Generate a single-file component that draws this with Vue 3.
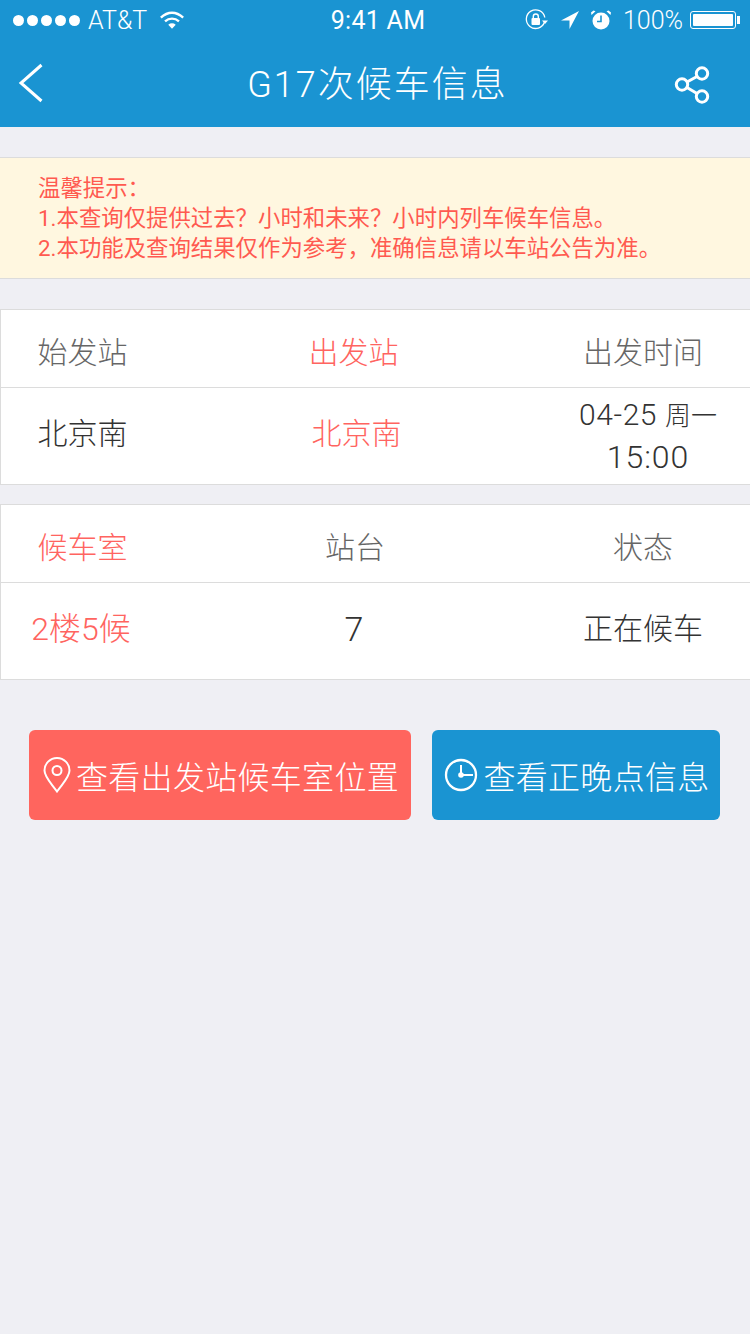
<template>
  <div class="page">
    <header class="head">
      <div class="status">
        <div class="status-left">
          <span class="dots"><i v-for="n in 5" :key="n"></i></span>
          <span class="carrier">AT&amp;T</span>
          <svg class="wifi" width="26" height="20" viewBox="0 0 28 20">
            <path d="M2 7.500C9.500 .5 18.500 .5 26 7.500" fill="none" stroke="#fff" stroke-width="2.600" />
            <path d="M6.500 11.500C11 7.500 17 7.500 21.500 11.500" fill="none" stroke="#fff" stroke-width="2.600" />
            <path d="M10 15c2.400-2 5.600-2 8 0l-4 4.500z" fill="#fff" />
          </svg>
        </div>
        <div class="clock">9:41 AM</div>
        <div class="status-right">
          <svg width="24" height="22" viewBox="0 0 24 22">
            <path d="M19.500 13A9.300 9.300 0 1 1 19.800 8.500" fill="none" stroke="#fff" stroke-width="1.300" />
            <path d="M17 11.500h6l-3 3.500z" fill="#fff" />
            <rect x="6.500" y="9" width="8.500" height="7" rx="1" fill="#fff" />
            <path d="M8.300 9V7.500a2.500 2.500 0 0 1 5 0V9" fill="none" stroke="#fff" stroke-width="1.400" />
          </svg>
          <svg class="arrow" width="20" height="20" viewBox="0 0 20 20">
            <path d="M19 1L1 10.500h8.500V19z" fill="#fff" />
          </svg>
          <svg class="alarm" width="22" height="22" viewBox="0 0 22 22">
            <circle cx="11" cy="12" r="8.500" fill="#fff" />
            <path d="M11 6.500V12.500H7" fill="none" stroke="#1a94d2" stroke-width="1.600" />
            <path d="M1.500 6L5.500 2.200 3.500 1.500 1 3.500zM20.500 6L16.500 2.200 18.500 1.500 21 3.500z" fill="#fff" />
          </svg>
          <span class="percent">100%</span>
          <span class="battery"><b></b></span>
        </div>
      </div>
      <nav class="nav">
        <svg class="back" width="26" height="40" viewBox="0 0 26 40">
          <path d="M23.500 2L3 20l20.500 18" fill="none" stroke="#fff" stroke-width="3" />
        </svg>
        <h1 class="title">G17次候车信息</h1>
        <svg class="share" width="38" height="44" viewBox="0 0 38 44">
          <circle cx="29" cy="10.500" r="5.700" fill="none" stroke="#fff" stroke-width="3" />
          <circle cx="9" cy="21.500" r="5.700" fill="none" stroke="#fff" stroke-width="3" />
          <circle cx="29" cy="33.500" r="5.700" fill="none" stroke="#fff" stroke-width="3" />
          <path d="M14 19L24 13.500M14 24.500L24 30.500" fill="none" stroke="#fff" stroke-width="3" />
        </svg>
      </nav>
    </header>

    <section class="tips">
      <p>温馨提示：</p>
      <p>1.本查询仅提供过去？小时和未来？小时内列车候车信息。</p>
      <p>2.本功能及查询结果仅作为参考，准确信息请以车站公告为准。</p>
    </section>

    <section class="card first">
      <div class="row top">
        <span class="muted">始发站</span>
        <span class="red pull">出发站</span>
        <span class="muted last">出发时间</span>
      </div>
      <div class="row bottom">
        <span class="dark">北京南</span>
        <span class="red shift">北京南</span>
        <span class="dark last date">
          <em>04-25 <small>周一</small></em>
          <em class="time">15:00</em>
        </span>
      </div>
    </section>

    <section class="card second">
      <div class="row top">
        <span class="red">候车室</span>
        <span class="muted">站台</span>
        <span class="muted last">状态</span>
      </div>
      <div class="row bottom">
        <span class="red big">2楼5候</span>
        <span class="dark seven">7</span>
        <span class="dark last">正在候车</span>
      </div>
    </section>

    <div class="actions">
      <button class="btn coral">
        <svg width="28" height="36" viewBox="0 0 28 36">
          <path d="M14 34.500C8 26 1.500 20 1.500 13.500a12.500 12.500 0 0 1 25 0C26.500 20 20 26 14 34.500z" fill="none" stroke="#fff" stroke-width="2" />
          <circle cx="14" cy="13.500" r="4.500" fill="none" stroke="#fff" stroke-width="2" />
        </svg>
        查看出发站候车室位置
      </button>
      <button class="btn blue">
        <svg width="34" height="34" viewBox="0 0 34 34">
          <circle cx="17" cy="17" r="15" fill="none" stroke="#fff" stroke-width="2.300" />
          <path d="M17 7v10h12" fill="none" stroke="#fff" stroke-width="2" />
          <circle cx="17" cy="17" r="2.800" fill="#fff" />
        </svg>
        查看正晚点信息
      </button>
    </div>
  </div>
</template>

<script setup>
</script>

<style>
body {
  background: #efeff4;
}
</style>

<style scoped>
.page {
  min-height: 1334px;
  background: #efeff4;
  font-family: "Roboto", "Noto Sans CJK SC", sans-serif;
  font-weight: 300;
}
.head {
  background: #1a94d2;
  color: #fff;
  height: 127px;
}
.status {
  height: 40px;
  display: grid;
  grid-template-columns: 1fr auto 1fr;
  align-items: center;
  padding: 0 10px 0 13px;
  font-size: 25px;
}
.status-left,
.status-right {
  display: flex;
  align-items: center;
}
.status-right {
  justify-content: flex-end;
}
.dots {
  display: flex;
  gap: 3px;
}
.dots i {
  width: 11px;
  height: 11px;
  border-radius: 50%;
  background: #fff;
}
.carrier {
  margin-left: 8px;
}
.wifi {
  margin-left: 12px;
}
.clock {
  letter-spacing: 0.3px;
  margin-left: 3px;
  font-weight: 400;
}
.arrow {
  margin-left: 11px;
}
.alarm {
  margin-left: 10px;
}
.percent {
  margin-left: 11px;
}
.battery {
  margin-left: 7px;
  margin-right: 4px;
  width: 46px;
  height: 18px;
  border: 1px solid #fff;
  border-radius: 3px;
  padding: 2px;
  box-sizing: border-box;
  position: relative;
  display: block;
}
.battery b {
  display: block;
  height: 100%;
  background: #fff;
  border-radius: 1px;
}
.battery::after {
  content: "";
  position: absolute;
  right: -5px;
  top: 4px;
  width: 3px;
  height: 8px;
  background: #fff;
}
.nav {
  height: 87px;
  display: flex;
  align-items: center;
  justify-content: space-between;
  padding: 0 39px 0 18px;
  margin-top: -3px;
}
.back {
  margin-top: 4px;
}
.share {
  margin-top: 8px;
}
.title {
  margin: 0 0 0 38px;
  font-size: 36px;
  font-weight: 300;
  letter-spacing: 2px;
}
.tips {
  margin-top: 30px;
  height: 122px;
  box-sizing: border-box;
  background: #fff7e0;
  border-top: 1px solid #dcdcdc;
  border-bottom: 1px solid #dcdcdc;
  padding: 15px 0 0 38px;
  color: #ff5a50;
  font-size: 22.400px;
  font-weight: 400;
  line-height: 30px;
}
.tips p {
  margin: 0;
}
.card {
  background: #fff;
  border: 1px solid #dcdcdc;
  border-width: 1px 0 1px 1px;
  box-sizing: border-box;
  height: 176px;
}
.first {
  margin-top: 30px;
}
.second {
  margin-top: 19px;
}
.row {
  display: grid;
  grid-template-columns: 163px 382px 194px 10px;
  align-items: center;
  justify-items: center;
  font-size: 30px;
}
.row span {
  white-space: nowrap;
}
.top {
  height: 78px;
  box-sizing: border-box;
  border-bottom: 1px solid #dcdcdc;
}
.top span {
  margin-top: 2px;
}
.bottom {
  height: 96px;
}
.bottom span {
  margin-bottom: 11px;
}
.muted {
  color: #666;
}
.red {
  color: #ff6460;
}
.dark {
  color: #333;
}
.pull {
  margin-right: 3px;
}
.shift {
  margin-left: 3px;
}
.big {
  font-size: 32px;
  margin-right: 3px;
}
.bottom .seven {
  font-size: 34px;
  margin-right: 2px;
  margin-bottom: 5px;
}
.bottom .date {
  margin: 0 0 0 10px;
  display: flex;
  flex-direction: column;
  align-items: center;
  line-height: 41px;
  font-size: 30px;
}
.date em {
  font-style: normal;
  letter-spacing: 0.6px;
}
.date small {
  font-size: 26px;
  letter-spacing: 0;
}
.date .time {
  font-size: 32px;
  letter-spacing: 1px;
}
.actions {
  display: flex;
  justify-content: space-between;
  padding: 50px 30px 0 29px;
}
.btn {
  height: 90px;
  border: 0;
  border-radius: 6px;
  color: #fff;
  font-family: inherit;
  font-weight: 300;
  font-size: 32px;
  letter-spacing: 0.3px;
  display: flex;
  align-items: center;
  justify-content: center;
  gap: 5px;
  padding: 0 0 0 2px;
  white-space: nowrap;
}
.coral {
  width: 382px;
  background: #ff655e;
}
.blue {
  width: 288px;
  background: #1a94d2;
}
</style>
